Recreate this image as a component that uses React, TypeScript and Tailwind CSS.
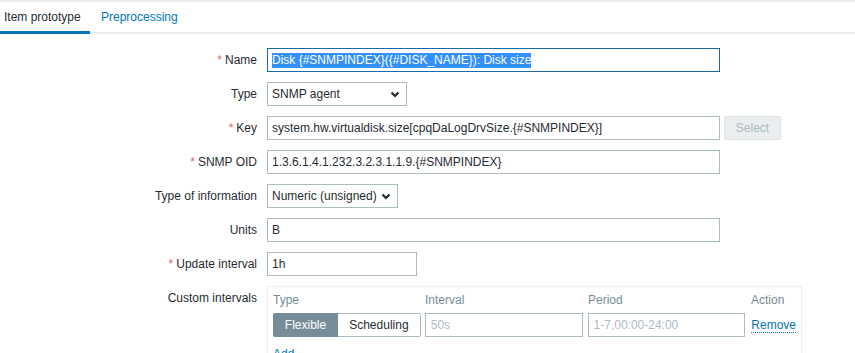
import React from "react";

function Chevron() {
  return (
    <svg width="10" height="7" viewBox="0 0 10 7" className="shrink-0">
      <path d="M1.5 1.5 L5 5 L8.5 1.5" fill="none" stroke="#1f2c33" strokeWidth="2.2" />
    </svg>
  );
}

function Label({ text, required }: { text: string; required?: boolean }) {
  return (
    <div className="w-[267px] shrink-0 pr-[10px] text-right leading-[14px]">
      {required && <span className="text-[#e06666] mr-[3px]">*</span>}
      {text}
    </div>
  );
}

function Field({ value, width }: { value: string; width: string }) {
  return (
    <div className={`${width} h-[24px] border border-[#acbbc2] px-[4px] flex items-center whitespace-nowrap overflow-hidden`}>
      {value}
    </div>
  );
}

function Select({ value, width }: { value: string; width: string }) {
  return (
    <div className={`${width} h-[24px] border border-[#acbbc2] pl-[4px] pr-[6px] flex items-center justify-between`}>
      <span>{value}</span>
      <Chevron />
    </div>
  );
}

export default function App() {
  return (
    <div className="w-[855px] h-[353px] overflow-hidden bg-white font-['Liberation_Sans',Arial,sans-serif] text-[12px] text-[#1f2c33]">
      <div className="border-t-2 border-[#ebeef0]">
        <div className="flex h-[32px] border-b-2 border-[#ebeef0]">
          <div className="relative w-[90px] pl-[4px] flex items-center">
            Item prototype
            <div className="absolute left-0 right-0 bottom-[-2px] h-[3px] bg-[#0275b8]" />
          </div>
          <div className="px-[11px] flex items-center text-[#0275b8]">Preprocessing</div>
        </div>
      </div>

      <div className="pt-[14px] flex flex-col gap-[10px]">
        <div className="flex items-center">
          <Label text="Name" required />
          <div className="w-[453px] h-[24px] border border-[#1a6aa3] px-[4px] flex items-center whitespace-nowrap">
            <span className="bg-[#3390ff] text-white leading-[15px]">
              Disk {"{#SNMPINDEX}"}({"{#DISK_NAME}"}): Disk size
            </span>
          </div>
        </div>

        <div className="flex items-center">
          <Label text="Type" />
          <Select value="SNMP agent" width="w-[140px]" />
        </div>

        <div className="flex items-center">
          <Label text="Key" required />
          <Field value="system.hw.virtualdisk.size[cpqDaLogDrvSize.{#SNMPINDEX}]" width="w-[453px]" />
          <div className="ml-[4px] w-[57px] h-[24px] bg-[#ebeef0] border border-[#dfe4e7] rounded-[2px] text-[#acbbc2] flex items-center justify-center">
            Select
          </div>
        </div>

        <div className="flex items-center">
          <Label text="SNMP OID" required />
          <Field value="1.3.6.1.4.1.232.3.2.3.1.1.9.{#SNMPINDEX}" width="w-[453px]" />
        </div>

        <div className="flex items-center">
          <Label text="Type of information" />
          <Select value="Numeric (unsigned)" width="w-[131px]" />
        </div>

        <div className="flex items-center">
          <Label text="Units" />
          <Field value="B" width="w-[453px]" />
        </div>

        <div className="flex items-center">
          <Label text="Update interval" required />
          <Field value="1h" width="w-[150px]" />
        </div>

        <div className="flex items-start">
          <div className="pt-[5px]">
            <Label text="Custom intervals" />
          </div>
          <div className="w-[535px] border border-[#ebeef0] px-[5px] pt-[5px] pb-[10px]">
            <div className="flex text-[#768d99] leading-[16px] mb-[5px]">
              <div className="w-[152px]">Type</div>
              <div className="w-[163px]">Interval</div>
              <div className="w-[163px]">Period</div>
              <div>Action</div>
            </div>
            <div className="flex items-center">
              <div className="flex h-[24px] w-[148px]">
                <div className="w-[65px] bg-[#768d99] text-white rounded-l-[2px] flex items-center justify-center">
                  Flexible
                </div>
                <div className="flex-1 border border-l-0 border-[#acbbc2] rounded-r-[2px] flex items-center justify-center">
                  Scheduling
                </div>
              </div>
              <div className="ml-[4px] w-[158px] h-[24px] border border-[#acbbc2] px-[5px] flex items-center text-[#acbbc2]">
                50s
              </div>
              <div className="ml-[5px] w-[158px] h-[24px] border border-[#acbbc2] px-[5px] flex items-center text-[#acbbc2]">
                1-7,00:00-24:00
              </div>
              <div className="ml-[6px]">
                <span className="text-[#0275b8] border-b border-dotted border-[#0275b8]">Remove</span>
              </div>
            </div>
            <div className="mt-[10px] text-[#0275b8] leading-[14px]">Add</div>
          </div>
        </div>
      </div>
    </div>
  );
}
